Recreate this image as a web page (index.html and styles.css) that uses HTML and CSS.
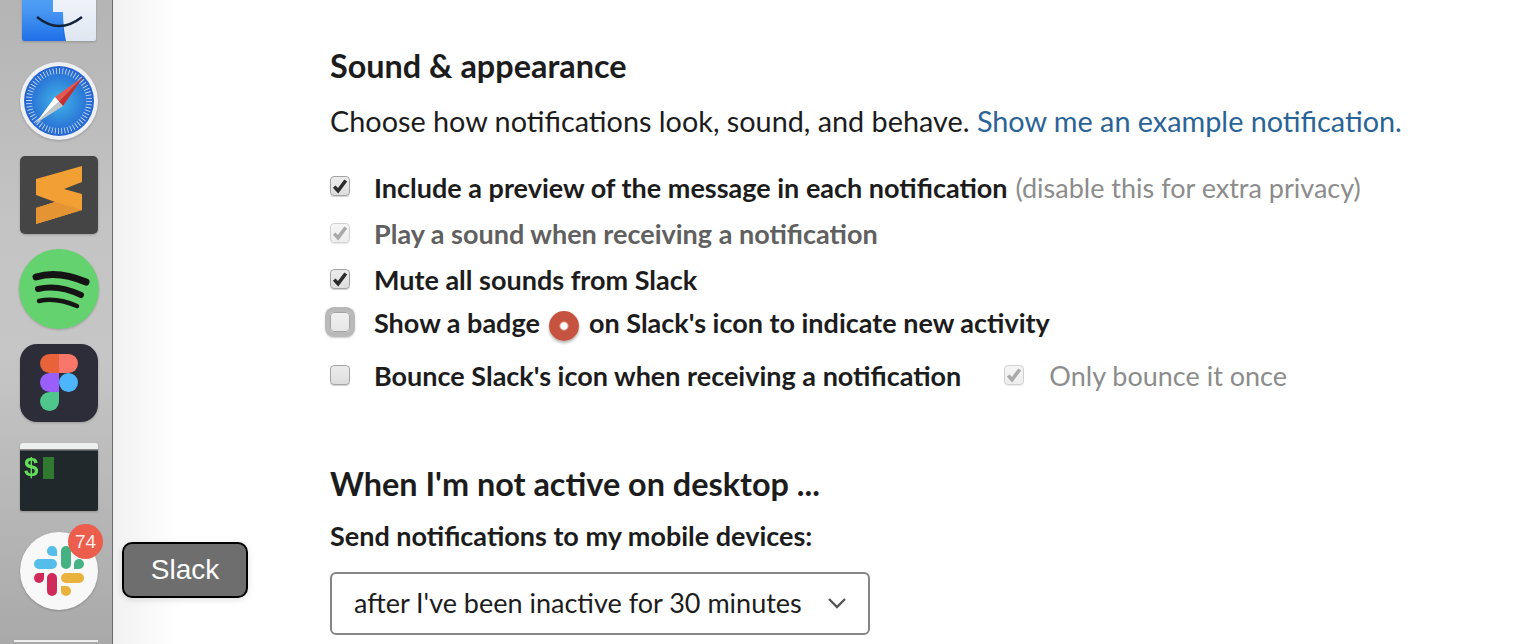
FILE: index.html
```html
<!DOCTYPE html>
<html lang="en">
<head>
<meta charset="utf-8">
<title>Sound &amp; appearance</title>
<link rel="stylesheet" href="styles.css">
</head>
<body>
<div class="screen">
  <aside class="dock">
    <div class="dock-icons">
      <svg class="icon" viewBox="0 0 78 78"><defs><linearGradient id="fb" x1="0" y1="0" x2="0" y2="1"><stop offset="0" stop-color="#62b5f7"/><stop offset=".6" stop-color="#4796f2"/><stop offset="1" stop-color="#1e6fe8"/></linearGradient><linearGradient id="fw" x1="0" y1="0" x2="0" y2="1"><stop offset="0" stop-color="#fbfcfd"/><stop offset="1" stop-color="#dfe7f2"/></linearGradient></defs><path d="M2 0h74v71a2 2 0 0 1-2 2H4a2 2 0 0 1-2-2z" fill="url(#fw)"/><path d="M2 0h31v44h10v29H4a2 2 0 0 1-2-2z" fill="url(#fb)"/><path d="M43 44c0 11 1 20 3 29h-3z" fill="#1e6fe8"/><path d="M17 49Q39 67 62 49" fill="none" stroke="#14233a" stroke-width="2.400"/></svg>
      <svg class="icon" viewBox="0 0 78 78"><defs><radialGradient id="sb"><stop offset="0" stop-color="#3fb6ea"/><stop offset="1" stop-color="#2563d0"/></radialGradient></defs><circle cx="39" cy="39" r="39" fill="#eef0f4"/><circle cx="39" cy="39" r="35" fill="url(#sb)"/><circle cx="39" cy="39" r="30" fill="none" stroke="#e6f1fb" stroke-width="6" stroke-dasharray=".9 2.240" opacity=".8"/><path d="M63 15L35 35 39 39.500z" fill="#e8584e"/><path d="M63 15L39 39.500 43 44z" fill="#c9302c"/><path d="M15 62L35 35 39 39.500z" fill="#fff"/><path d="M15 62L39 39.500 43 44z" fill="#c4c6c8"/></svg>
      <svg class="icon" viewBox="0 0 78 78"><rect width="78" height="78" rx="5" fill="#454545"/><path d="M16 23L62 10V26L44 33 62 38V54L16 68V52L35 46 16 39z" fill="#f2a033"/><path d="M16 52L35 46 62 54 16 68z" fill="#e59434"/></svg>
      <svg class="icon" viewBox="0 0 78 78"><circle cx="39" cy="39" r="40" fill="#64d26e"/><g fill="none" stroke="#141414" stroke-linecap="round"><path d="M16 27Q38 20 66 32" stroke-width="7"/><path d="M18 39Q38 34 61 45" stroke-width="6"/><path d="M19 51Q36 47 57 56" stroke-width="4.500"/></g></svg>
      <svg class="icon" viewBox="0 0 78 78"><rect width="78" height="78" rx="17" fill="#2c2d38"/><path d="M39 10v19H29.500a9.500 9.500 0 0 1 0-19z" fill="#e8623a"/><path d="M39 10h9.500a9.500 9.500 0 0 1 0 19H39z" fill="#f8776a"/><path d="M39 29v19h-9.500a9.500 9.500 0 0 1 0-19z" fill="#9a5ffa"/><circle cx="48.500" cy="38.500" r="9.500" fill="#4db5fb"/><path d="M39 48v9.500a9.500 9.500 0 1 1-9.500-9.500z" fill="#4fc68c"/></svg>
      <svg class="icon" viewBox="0 0 78 78"><path d="M0 8a3 3 0 0 1 3-3h72a3 3 0 0 1 3 3v4H0z" fill="#eef0f0"/><path d="M0 12h78v59a2 2 0 0 1-2 2H2a2 2 0 0 1-2-2z" fill="#20282c"/><rect y="11" width="78" height="1.500" fill="#8c8c8c"/><text class="prompt" x="4" y="38">$</text><rect x="23" y="19" width="11" height="22" fill="#2f7a2e"/></svg>
      <div class="slack-wrap">
        <svg class="icon" viewBox="0 0 78 78"><circle cx="39" cy="39" r="39" fill="#f8f8f8"/><path d="M37 24h-5a5 5 0 1 1 5-5z" fill="#55bde9"/><path d="M19 32h13" stroke="#55bde9" stroke-width="10" stroke-linecap="round"/><path d="M46 19v13" stroke="#45b283" stroke-width="10" stroke-linecap="round"/><path d="M54 37v-5a5 5 0 1 1 5 5z" fill="#45b283"/><path d="M24 41v5a5 5 0 1 1-5-5z" fill="#cf2a5a"/><path d="M32 46v13" stroke="#cf2a5a" stroke-width="10" stroke-linecap="round"/><path d="M46 46h13" stroke="#eab13d" stroke-width="10" stroke-linecap="round"/><path d="M41 54h5a5 5 0 1 1-5 5z" fill="#eab13d"/></svg>
        <span class="dock-badge">74</span>
      </div>
    </div>
    <div class="dock-divider"></div>
  </aside>

  <main class="content">
    <h2 class="title">Sound &amp; appearance</h2>
    <p class="intro">Choose how notifications look, sound, and behave. <a class="link" href="#">Show me an example notification.</a></p>

    <ul class="options">
      <li class="option row-a">
        <span class="box checked"><svg viewBox="0 0 14 14"><path d="M2.500 7.500l3 3.200 6-8" /></svg></span>
        <span class="label">Include a preview of the message in each notification</span>
        <span class="hint">(disable this for extra privacy)</span>
      </li>
      <li class="option row-b is-muted">
        <span class="box checked disabled"><svg viewBox="0 0 14 14"><path d="M2.500 7.500l3 3.200 6-8" /></svg></span>
        <span class="label">Play a sound when receiving a notification</span>
      </li>
      <li class="option row-c">
        <span class="box checked"><svg viewBox="0 0 14 14"><path d="M2.500 7.500l3 3.200 6-8" /></svg></span>
        <span class="label">Mute all sounds from Slack</span>
      </li>
      <li class="option row-d">
        <span class="box focused"></span>
        <span class="label">Show a badge <span class="red-dot"></span> on Slack's icon to indicate new activity</span>
      </li>
      <li class="option row-e">
        <span class="box"></span>
        <span class="label">Bounce Slack's icon when receiving a notification</span>
        <span class="sub-option">
          <span class="box checked disabled"><svg viewBox="0 0 14 14"><path d="M2.500 7.500l3 3.200 6-8" /></svg></span>
          <span class="sub-label">Only bounce it once</span>
        </span>
      </li>
    </ul>

    <h2 class="title second">When I'm not active on desktop ...</h2>
    <div class="field-label">Send notifications to my mobile devices:</div>
    <div class="select">
      <span>after I've been inactive for 30 minutes</span>
      <svg class="chevron" viewBox="0 0 20 12"><path d="M2 2l8 8 8-8"/></svg>
    </div>
  </main>

  <div class="tooltip">Slack</div>
</div>
</body>
</html>
```
FILE: styles.css
```css
* { box-sizing: border-box; }
html, body { margin: 0; padding: 0; height: 100%; overflow: hidden; background: #fff; }
body {
  font-family: Lato, "Noto Sans", sans-serif;
  color: #1d1c1d;
  font-variant-ligatures: common-ligatures;
}
.screen {
  position: relative;
  display: flex;
  width: 1526px;
  height: 644px;
  overflow: hidden;
  background: linear-gradient(90deg, #f1f1f2 113px, #fff 180px);
}
.dock {
  flex: 0 0 113px;
  height: 644px;
  position: relative;
  border-right: 1px solid #6a6a6a;
  background: linear-gradient(180deg, #b4b4b4 0, #c4c4c4 35%, #c6c6c6 55%, #a9a9a9 100%);
}
.dock-icons {
  display: flex;
  flex-direction: column;
  align-items: center;
  gap: 16px;
  margin-top: -32px;
  padding-left: 6px;
}
.icon { display: block; width: 78px; height: 78px; flex: none; overflow: visible; filter: drop-shadow(0 1px 1px rgba(0,0,0,.2)); }
.prompt { font: 700 26px "Liberation Sans", sans-serif; fill: #63dd5a; }
.slack-wrap { position: relative; width: 78px; height: 78px; }
.dock-badge {
  position: absolute;
  top: -8px;
  right: -5px;
  width: 35px;
  height: 35px;
  border-radius: 50%;
  background: #ec5d4b;
  color: #fbeeee;
  font: 400 19px/35px "Liberation Sans", sans-serif;
  text-align: center;
}
.dock-divider {
  position: absolute;
  left: 14px;
  top: 640px;
  width: 84px;
  height: 2px;
  background: #efefef;
}
.content { flex: 1; padding: 45px 0 0 217px; min-width: 0; }
.title { margin: 0; font-size: 32.400px; line-height: 42px; font-weight: 700; }
.intro { margin: 13px 0 0; font-size: 28.800px; line-height: 42px; white-space: nowrap; }
.link { color: #2a6496; text-decoration: none; }
.options { list-style: none; margin: 27px 0 0; padding: 0; }
.option { display: flex; align-items: center; height: 36px; font-size: 27px; white-space: nowrap; }
.row-b, .row-c { margin-top: 10px; }
.row-d { margin-top: 8px; }
.row-e { margin-top: 16px; }
.label { font-weight: 700; margin-left: 24px; }
.hint { color: #8c8c8c; margin-left: 8px; }
.is-muted .label { color: #616061; }
.box {
  flex: none;
  display: block;
  width: 20px;
  height: 20px;
  border-radius: 4px;
  border: 1px solid #a4a4a4;
  background: linear-gradient(#ececec, #dedede);
  box-shadow: 0 1px 1px rgba(0,0,0,.18);
}
.box svg { display: block; width: 100%; height: 100%; fill: none; stroke: #2c2c2c; stroke-width: 2.800; }
.box.disabled { opacity: .5; }
.box.disabled svg { stroke: #555; }
.row-a .box { margin-top: -3px; }
.row-d .box { margin-top: -2px; }
.box.focused { background: linear-gradient(#f0f0f0, #e6e6e6); box-shadow: 0 0 0 5px #b9b9b9, 0 1px 2px 5px rgba(0,0,0,.2); }
.red-dot {
  display: inline-block;
  vertical-align: -8px;
  width: 30px;
  height: 30px;
  margin: 0 3px;
  border-radius: 50%;
  background: radial-gradient(circle, #fff 0 3px, #c5533f 5px);
  box-shadow: 0 2px 3px rgba(0,0,0,.3);
}
.row-d .label { margin-top: 1px; }
.sub-option { display: flex; align-items: center; margin-left: 43px; }
.sub-label { color: #8c8c8c; margin-left: 25px; }
.second { margin-top: 70px; }
.field-label { margin-top: 13px; font-size: 27px; line-height: 36px; font-weight: 700; }
.select {
  display: flex;
  align-items: center;
  justify-content: space-between;
  margin-top: 18px;
  width: 540px;
  height: 63px;
  padding: 0 21px 2px 22px;
  border: 2px solid #868686;
  border-radius: 6px;
  background: #fff;
  font-size: 27px;
  white-space: nowrap;
}
.chevron { width: 20px; height: 12px; fill: none; stroke: #555; stroke-width: 2.400; }
.tooltip {
  position: absolute;
  left: 122px;
  top: 542px;
  width: 126px;
  height: 56px;
  border: 2px solid #000;
  border-radius: 10px;
  background: #6e6e6e;
  color: #fff;
  font: 400 28px/52px "Liberation Sans", sans-serif;
  text-align: center;
  box-shadow: 0 2px 6px rgba(0,0,0,.12);
}
```
